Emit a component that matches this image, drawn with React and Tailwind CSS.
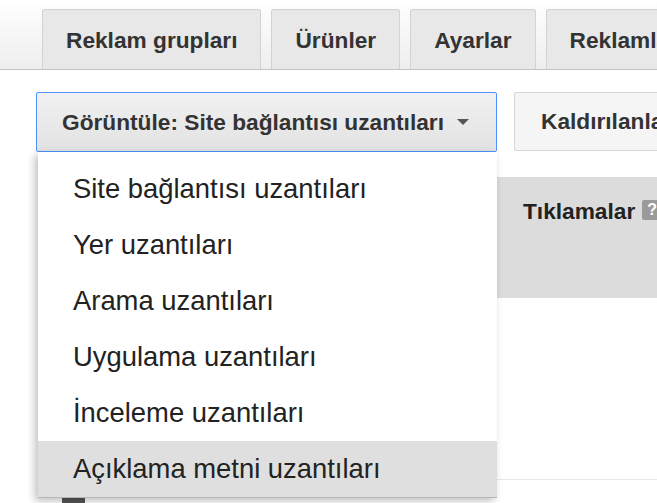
import React from 'react';

const tabs = ['Reklam grupları', 'Ürünler', 'Ayarlar', 'Reklamlar'];

const menuItems = [
  'Site bağlantısı uzantıları',
  'Yer uzantıları',
  'Arama uzantıları',
  'Uygulama uzantıları',
  'İnceleme uzantıları',
  'Açıklama metni uzantıları',
];

const App = () => {
  return (
    <div className="relative w-[657px] h-[503px] overflow-hidden bg-white font-['Liberation_Sans',Arial,sans-serif] text-[#222]">
      {/* Tab strip */}
      <div className="h-[70px] flex items-end gap-[10px] pl-[42px] border-b border-[#c4c4c4] bg-gradient-to-b from-white to-[#eeeeee]">
        {tabs.map((tab) => (
          <div
            key={tab}
            className="h-[60px] shrink-0 flex items-center pt-[2px] px-[23px] bg-[#e8e8e8] border border-b-0 border-[#d2d2d2] rounded-t-[3px] text-[22.7px] font-bold text-[#333]"
          >
            {tab}
          </div>
        ))}
      </div>

      {/* Toolbar */}
      <div className="mt-[22px] ml-[36px] flex gap-[17px]">
        <button className="w-[461px] h-[60px] shrink-0 flex items-center pl-[25px] border border-[#4d90fe] rounded-[2px] bg-gradient-to-b from-[#f1f1f1] to-[#e2e2e2] text-[22.7px] font-bold text-[#333]">
          <span>Görüntüle: Site bağlantısı uzantıları</span>
          <span className="ml-[13px] w-0 h-0 border-l-[6px] border-r-[6px] border-t-[6px] border-l-transparent border-r-transparent border-t-[#555]" />
        </button>
        <button className="h-[59px] shrink-0 flex items-center px-[26px] border border-[#d6d6d6] rounded-[2px] bg-[#f5f5f5] text-[22.7px] font-bold text-[#333]">
          Kaldırılanları göster
        </button>
      </div>

      {/* Table behind the menu */}
      <div className="mt-[25px] ml-[40px]">
        <div className="h-[121px] bg-[#dcdcdc] flex pl-[483px] pt-[20px]">
          <span className="text-[22.7px] font-bold text-[#222] leading-[28px]">Tıklamalar</span>
          <span className="ml-[7px] mt-[3px] w-[20px] h-[20px] shrink-0 rounded-[2px] bg-[#9a9a9a] text-white text-[16px] font-bold leading-[20px] text-center">?</span>
        </div>
        <div className="h-[182px] border-b border-[#e8e8e8]" />
        <div className="h-[18px] flex pl-[22px] pt-[18px]">
          <span className="w-[23px] h-[6px] bg-[#555]" />
        </div>
      </div>

      {/* Dropdown menu */}
      <div className="absolute left-[38px] top-[152px] w-[459px] h-[346px] pt-[9px] bg-white border-b-2 border-[#b5b5b5] shadow-[-3px_3px_8px_rgba(0,0,0,0.25)]">
        {menuItems.map((item, i) => (
          <div
            key={item}
            className={`h-[56px] flex items-center pl-[35px] text-[27.4px] text-[#222] ${
              i === menuItems.length - 1 ? 'bg-[#dfdfdf]' : ''
            }`}
          >
            {item}
          </div>
        ))}
      </div>
    </div>
  );
};

export default App;
